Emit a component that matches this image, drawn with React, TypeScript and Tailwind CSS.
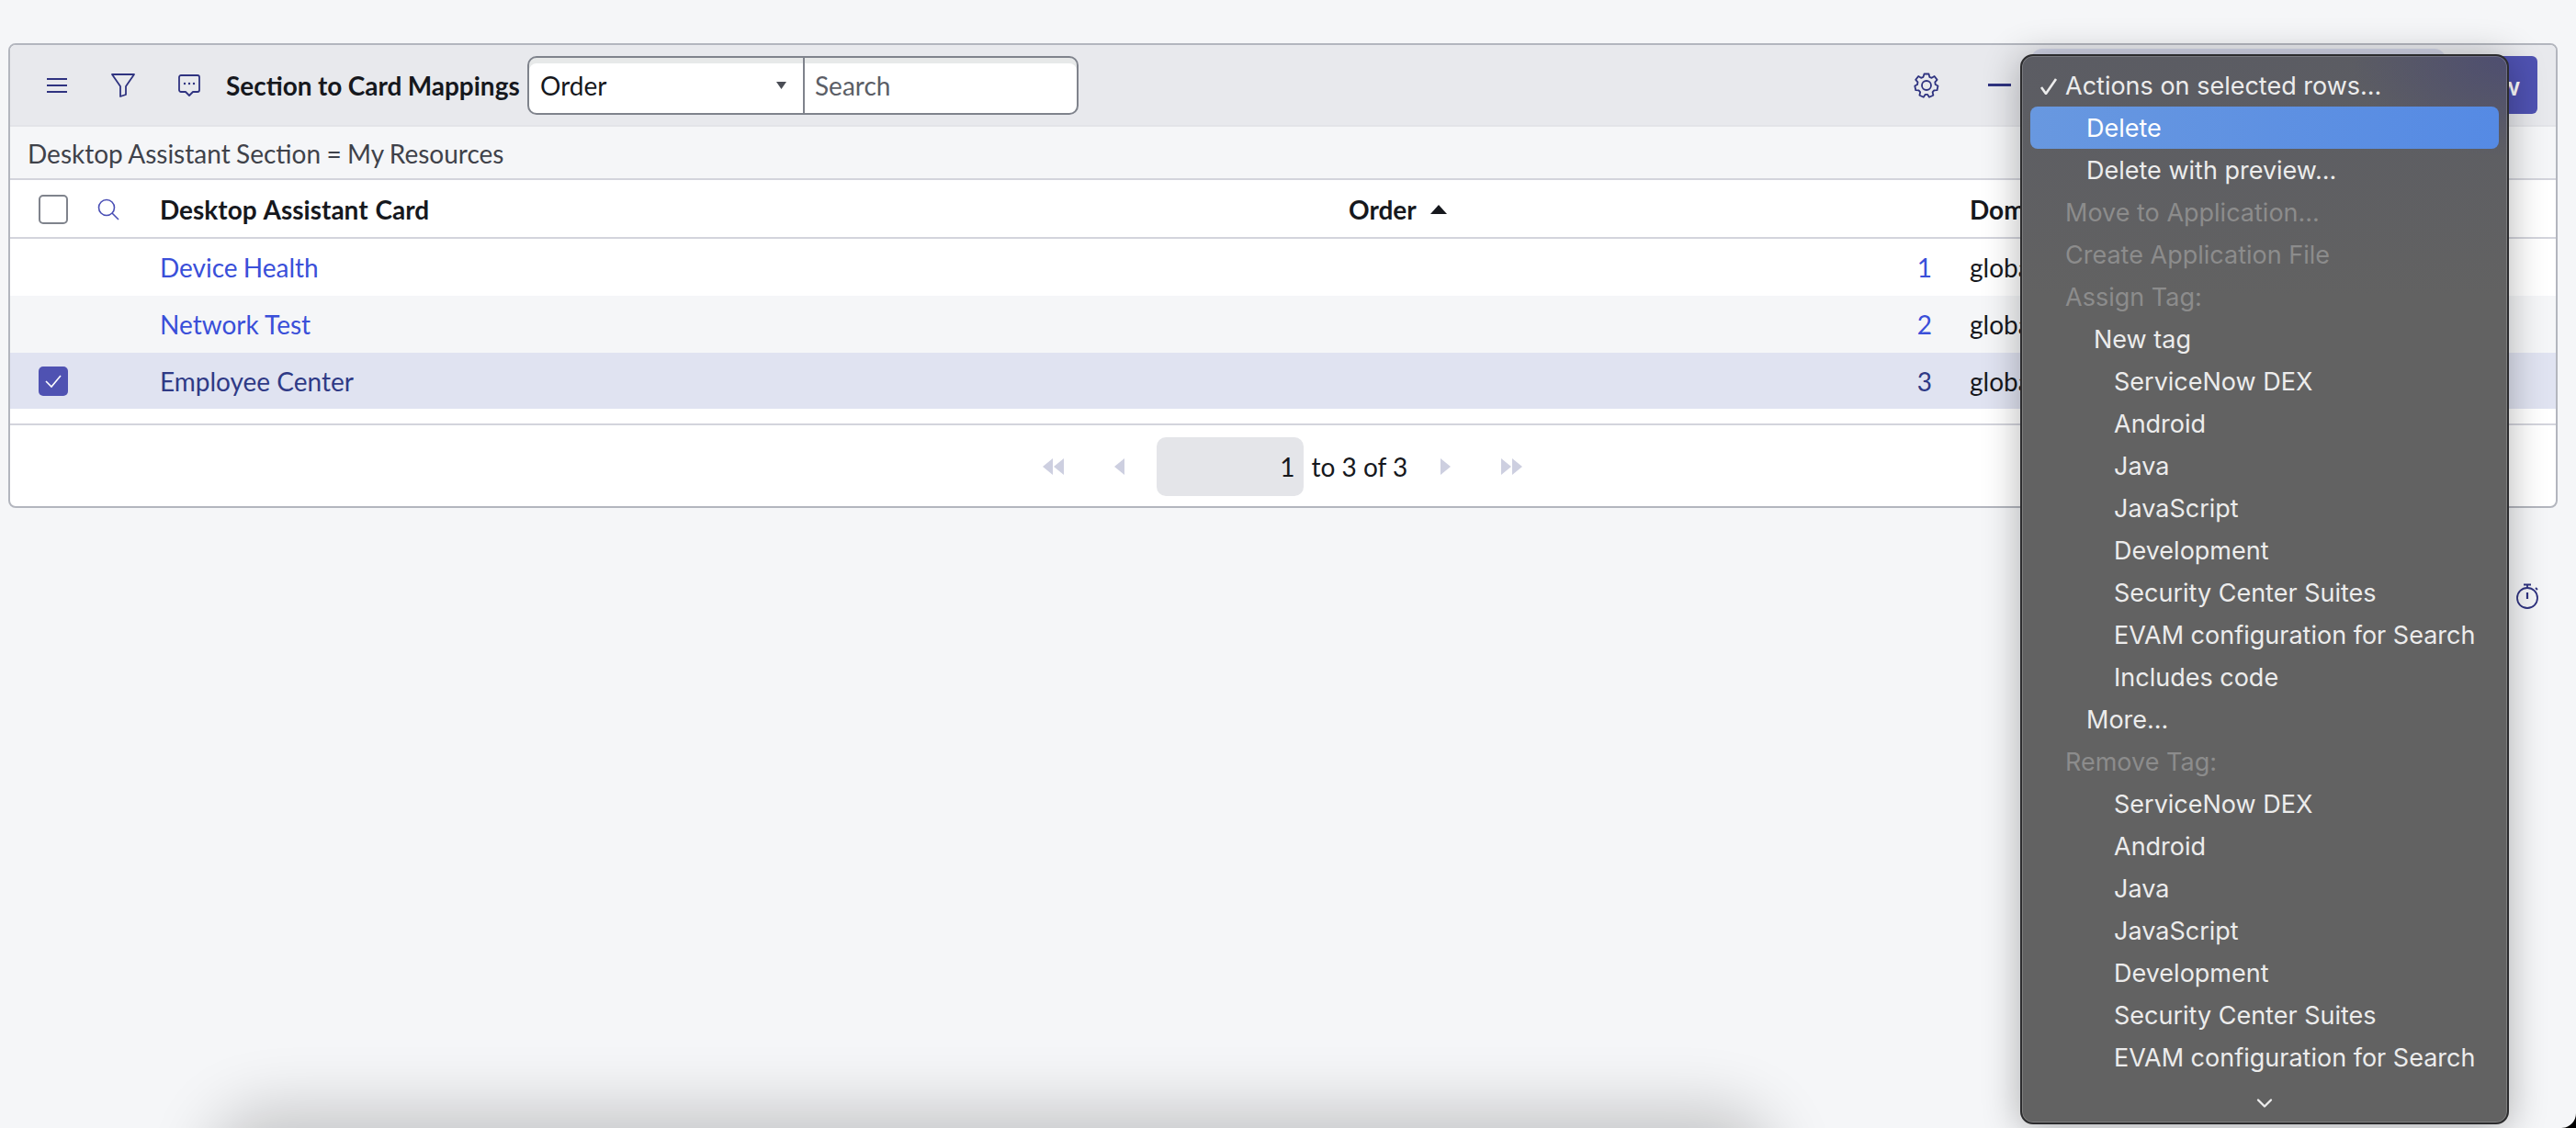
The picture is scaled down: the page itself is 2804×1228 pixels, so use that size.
import { ChevronDown } from "lucide-react";

const tags = [
  "ServiceNow DEX",
  "Android",
  "Java",
  "JavaScript",
  "Development",
  "Security Center Suites",
  "EVAM configuration for Search",
];

function FilterIcon() {
  return (
    <svg width="26" height="26" viewBox="0 0 26 26" fill="none" stroke="#2f3380" strokeWidth="1.8" strokeLinejoin="round">
      <path d="M1 1h24l-9 13v9l-6 2V14z" />
    </svg>
  );
}

function ChatIcon() {
  return (
    <svg width="24" height="24" viewBox="0 0 24 24" fill="none" stroke="#2f3380" strokeWidth="1.8" strokeLinejoin="round">
      <path d="M3 1h18a2 2 0 0 1 2 2v14a2 2 0 0 1-2 2h-5l-4 4-4-4H3a2 2 0 0 1-2-2V3a2 2 0 0 1 2-2z" />
      <circle cx="7" cy="10" r="1.2" fill="#2f3380" stroke="none" />
      <circle cx="12" cy="10" r="1.2" fill="#2f3380" stroke="none" />
      <circle cx="17" cy="10" r="1.2" fill="#2f3380" stroke="none" />
    </svg>
  );
}

function GearIcon() {
  return (
    <svg width="28" height="28" viewBox="0 0 28 28" fill="none" stroke="#2f3380" strokeWidth="1.8" strokeLinejoin="round">
      <path d="M11.5 1.5h5l.8 3.3 2.4 1 2.9-1.8 3 3.9-2.3 2.5.4 2.6 2.8 1.5-1 4.7-3.3.2-1.6 2 .8 3.3-4.4 2-1.8-2.8h-2.6l-1.8 2.8-4.4-2 .8-3.3-1.6-2-3.3-.2-1-4.7 2.8-1.5.4-2.6-2.3-2.5 3-3.9 2.9 1.8 2.4-1z" />
      <circle cx="14" cy="14" r="5" />
    </svg>
  );
}

function SearchIcon() {
  return (
    <svg width="24" height="24" viewBox="0 0 24 24" fill="none" stroke="#4a4fb5" strokeWidth="1.6">
      <circle cx="10" cy="10" r="8.5" />
      <path d="M16 16l7 7" />
    </svg>
  );
}

function StopwatchIcon() {
  return (
    <svg width="26" height="28" viewBox="0 0 26 28" fill="none" stroke="#2f3380" strokeWidth="1.8">
      <circle cx="13" cy="16" r="11" />
      <path d="M9 1.5h8M13 1.5v3.5M22 5l2 2" />
      <path d="M13 10v7" strokeWidth="2.2" />
    </svg>
  );
}

function Triangle({ dir }: { dir: "left" | "right" }) {
  return (
    <svg width="11" height="18" viewBox="0 0 11 18" fill="#cdcfe0">
      {dir === "left" ? <path d="M11 0v18L0 9z" /> : <path d="M0 0v18l11-9z" />}
    </svg>
  );
}

function MenuRow({ label, pl, disabled, active }: { label: string; pl: string; disabled?: boolean; active?: boolean }) {
  return (
    <div
      className={`h-[46px] pt-[3px] flex items-center rounded-[8px] mx-[9px] ${pl} ${
        active ? "bg-gradient-to-r from-[#6898e0] to-[#558ae4] text-white" : disabled ? "text-[#8c8c8c]" : "text-[#ececec]"
      }`}
    >
      {label}
    </div>
  );
}

export default function App() {
  return (
    <div className="relative w-[2804px] h-[1228px] overflow-hidden bg-[#f5f6f8] font-['Lato',sans-serif] text-[28px] text-[#16181d]">
      <div className="absolute left-[250px] top-[1228px] w-[1660px] h-[100px] rounded-[40px] shadow-[0_0_70px_20px_rgba(0,0,0,0.2)]" />

      <div className="pt-[47px] pl-[9px]">
        <div className="w-[2775px] h-[506px] border-2 border-[#b3b6be] rounded-[8px] bg-white overflow-hidden">
          {/* toolbar */}
          <div className="h-[89px] bg-[#e8e9ed] flex items-center pl-[40px] pr-[20px] border-b-2 border-[#e3e4e8]">
            <div className="w-[22px] flex flex-col gap-[5px]">
              <div className="h-[2px] bg-[#2f3380]" />
              <div className="h-[2px] bg-[#2f3380]" />
              <div className="h-[2px] bg-[#2f3380]" />
            </div>
            <div className="ml-[48px] flex">
              <FilterIcon />
            </div>
            <div className="ml-[47px] flex">
              <ChatIcon />
            </div>
            <div className="ml-[28px] w-[328px] font-bold whitespace-nowrap [word-spacing:-0.5px]">Section to Card Mappings</div>
            <div className="flex h-[64px] w-[600px] rounded-[10px] border-2 border-[#7f838c] bg-white overflow-hidden shadow-[inset_0_6px_0_#e7e9e9]">
              <div className="w-[300px] flex items-center justify-between pl-[12px] pr-[18px] border-r-2 border-[#7f838c]">
                <span>Order</span>
                <svg width="11" height="8" viewBox="0 0 11 8" fill="#4a4d55">
                  <path d="M0 0h11L5.5 8z" />
                </svg>
              </div>
              <div className="flex-1 flex items-center pl-[11px] text-[#5b5e66]">Search</div>
            </div>
            <div className="ml-auto flex">
              <GearIcon />
            </div>
            <div className="ml-[53px] w-[25px] h-[2.5px] bg-[#2f3380]" />
            <div className="ml-[22px] w-[451px] h-[79px] rounded-[12px] bg-[#d0d3e5]" />
            <div className="ml-[11px] w-[89px] h-[63px] rounded-[6px] bg-[#4f52b2] text-white flex items-center justify-end pr-[19px] font-bold">
              New
            </div>
          </div>

          {/* filter */}
          <div className="h-[58px] pt-[2px] bg-[#f5f6f8] flex items-center pl-[19px] text-[#3f424a] border-b-2 border-[#d3d4dc] [word-spacing:-0.8px]">
            Desktop Assistant Section = My Resources
          </div>

          {/* table */}
          <div className="h-[64px] pt-[2px] grid grid-cols-[163px_1294px_676px_1fr] items-center border-b-2 border-[#d3d4dc] font-bold">
            <div className="pl-[31px] flex items-center gap-[32px]">
              <div className="w-[32px] h-[32px] rounded-[5px] border-2 border-[#7f838c] bg-white" />
              <SearchIcon />
            </div>
            <div className="[word-spacing:1px]">Desktop Assistant Card</div>
            <div className="flex items-center gap-[15px]">
              Order
              <svg width="18" height="10" viewBox="0 0 18 10" fill="#16181d">
                <path d="M0 10h18L9 0z" />
              </svg>
            </div>
            <div>Domain</div>
          </div>

          <div className="h-[62px] grid grid-cols-[163px_1294px_676px_1fr] items-center">
            <div />
            <div className="text-[#3a4fd9] [word-spacing:-1px]">Device Health</div>
            <div className="text-right pr-[41px] text-[#3a4fd9]">1</div>
            <div>global</div>
          </div>
          <div className="h-[62px] grid grid-cols-[163px_1294px_676px_1fr] items-center bg-[#f5f6f8]">
            <div />
            <div className="text-[#3a4fd9]">Network Test</div>
            <div className="text-right pr-[41px] text-[#3a4fd9]">2</div>
            <div>global</div>
          </div>
          <div className="h-[61px] grid grid-cols-[163px_1294px_676px_1fr] items-center bg-[#e0e3f1]">
            <div className="pl-[31px]">
              <div className="w-[32px] h-[32px] rounded-[5px] bg-[#4f52b2] flex items-center justify-center">
                <svg width="20" height="16" viewBox="0 0 20 16" fill="none" stroke="white" strokeWidth="1.6">
                  <path d="M2 8l6 6L18 2" />
                </svg>
              </div>
            </div>
            <div className="text-[#2f3a86]">Employee Center</div>
            <div className="text-right pr-[41px] text-[#2f3a86]">3</div>
            <div>global</div>
          </div>

          {/* pagination */}
          <div className="h-[18px] border-b-2 border-[#d3d4dc]" />
          <div className="h-[89px] flex items-center justify-center pr-[2px]">
            <div className="flex gap-[1px]">
              <Triangle dir="left" />
              <Triangle dir="left" />
            </div>
            <div className="ml-[55px] flex">
              <Triangle dir="left" />
            </div>
            <div className="ml-[35px] w-[160px] h-[64px] rounded-[10px] bg-[#e4e5e9] flex items-center justify-end pr-[9px]">1</div>
            <div className="ml-[9px] w-[104px] whitespace-nowrap">to 3 of 3</div>
            <div className="ml-[36px] flex">
              <Triangle dir="right" />
            </div>
            <div className="ml-[55px] flex gap-[1px]">
              <Triangle dir="right" />
              <Triangle dir="right" />
            </div>
          </div>
        </div>
      </div>

      <div className="absolute left-[2738px] top-[635px]">
        <StopwatchIcon />
      </div>

      {/* actions menu */}
      <div className="absolute left-[2199px] top-[59px] w-[532px] h-[1165px] rounded-[14px] border-2 border-[#2c2c2e] bg-[#626262] bg-[radial-gradient(ellipse_170px_110px_at_100%_0%,#4e4e70,transparent),linear-gradient(180deg,#5b5c63,#626262_260px)] pt-[9px] font-['Inter',sans-serif] text-[27px] shadow-[0_4px_40px_rgba(0,0,0,0.3),inset_0_0_0_1px_rgba(255,255,255,0.18)]">
        <div className="relative">
          <svg className="absolute left-[19px] top-[15px]" width="20" height="18" viewBox="0 0 20 18" fill="none" stroke="#ececec" strokeWidth="2.6">
            <path d="M2 10l5 7L18 1" />
          </svg>
          <MenuRow label="Actions on selected rows..." pl="pl-[38px]" />
        </div>
        <MenuRow label="Delete" pl="pl-[61px]" active />
        <MenuRow label="Delete with preview..." pl="pl-[61px]" />
        <MenuRow label="Move to Application..." pl="pl-[38px]" disabled />
        <MenuRow label="Create Application File" pl="pl-[38px]" disabled />
        <MenuRow label="Assign Tag:" pl="pl-[38px]" disabled />
        <MenuRow label="New tag" pl="pl-[69px]" />
        {tags.map((t) => (
          <MenuRow key={t} label={t} pl="pl-[91px]" />
        ))}
        <MenuRow label="Includes code" pl="pl-[91px]" />
        <MenuRow label="More..." pl="pl-[61px]" />
        <MenuRow label="Remove Tag:" pl="pl-[38px]" disabled />
        {tags.map((t) => (
          <MenuRow key={"r" + t} label={t} pl="pl-[91px]" />
        ))}
        <div className="flex justify-center pt-[13px] text-[#ececec]">
          <ChevronDown size={28} strokeWidth={2} />
        </div>
      </div>

      {/* window corner */}
      <svg className="absolute right-0 bottom-0" width="16" height="16" viewBox="0 0 16 16" fill="#000">
        <path d="M16 0A16 16 0 0 1 0 16H16z" />
      </svg>
    </div>
  );
}
